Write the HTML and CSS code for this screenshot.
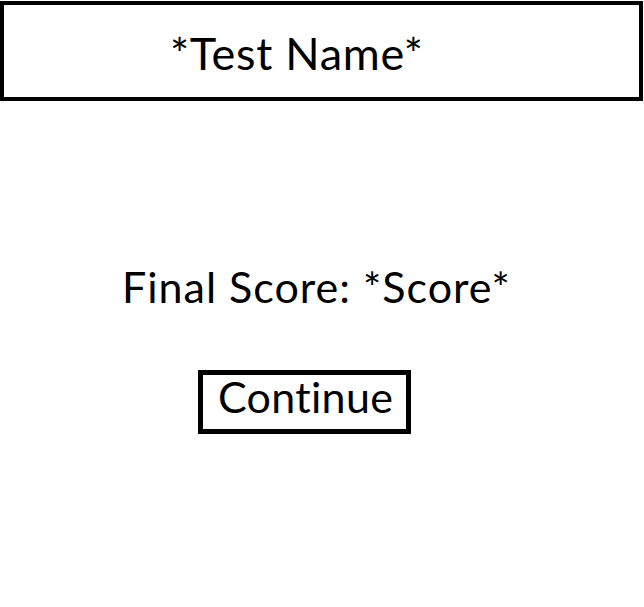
FILE: index.html
```html
<!DOCTYPE html>
<html>
<head>
<meta charset="utf-8">
<link rel="stylesheet" href="styles.css">
</head>
<body>
<header class="title-bar">
  <h1 class="title">*Test Name*</h1>
</header>
<main class="result">
  <p class="score">Final Score: *Score*</p>
  <button class="continue">Continue</button>
</main>
</body>
</html>
```

FILE: styles.css
```css
html, body {
  margin: 0;
  padding: 0;
  background: #fff;
}
body {
  font-family: Lato, "Liberation Sans", sans-serif;
  font-variant-ligatures: none;
  color: #000;
  width: 644px;
  height: 607px;
  overflow: hidden;
}
.title-bar {
  box-sizing: border-box;
  margin-top: 1px;
  width: 643px;
  height: 100px;
  border: 4px solid #000;
  display: flex;
  align-items: center;
  padding-left: 166px;
  padding-top: 4px;
}
.title {
  margin: 0;
  font-weight: 400;
  font-size: 45px;
  letter-spacing: 0.7px;
  line-height: 1;
}
.result {
  display: flex;
  flex-direction: column;
  align-items: flex-start;
  padding-top: 161px;
}
.score {
  margin: 0 0 0 122px;
  font-size: 43px;
  letter-spacing: 1px;
  line-height: 50px;
}
.continue {
  box-sizing: border-box;
  margin: 58px 0 0 198px;
  width: 213px;
  height: 64px;
  border: 5px solid #000;
  background: #fff;
  font-family: inherit;
  font-size: 43px;
  letter-spacing: 0.3px;
  color: #000;
  padding: 0 0 12px 15px;
  text-align: left;
  line-height: 1;
}
```
